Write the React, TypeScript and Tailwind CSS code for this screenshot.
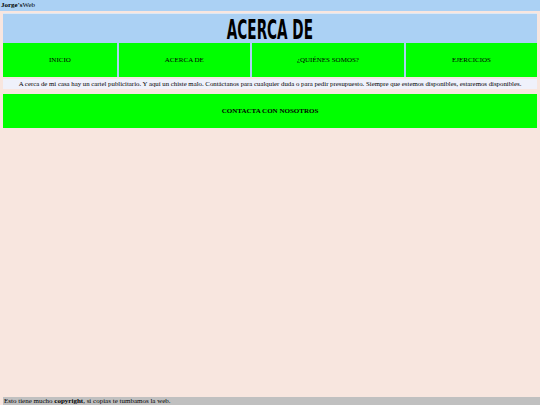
const navLinks = [
  { label: "INICIO" },
  { label: "ACERCA DE" },
  { label: "¿QUIÉNES SOMOS?" },
  { label: "EJERCICIOS" },
];

export default function App() {
  return (
    <div className="min-h-screen flex flex-col bg-[#f8e6df] text-black font-['Liberation_Serif',serif]">
      {/* Top bar */}
      <div className="h-[11px] bg-[#abd1f4] text-[7px] leading-[11px] pl-px">
        <b>Jorge's</b>Web
      </div>

      <main className="px-[3px] pt-[2px]">
        {/* Header */}
        <header className="bg-[#abd1f4] border-t border-[#dde8f4]">
          <h1 className="h-[29px] text-center leading-[32px]">
            <span className="inline-block scale-x-[0.56] text-[27px] font-bold font-['DejaVu_Sans_Condensed','DejaVu_Sans',sans-serif] [font-stretch:condensed]">
              ACERCA DE
            </span>
          </h1>
          <nav className="grid grid-cols-[113fr_130fr_151fr_130fr] gap-[2px]">
            {navLinks.map((link) => (
              <a
                key={link.label}
                href="#"
                className="h-[34px] bg-[#00ff00] flex items-center justify-center text-[7px]"
              >
                {link.label}
              </a>
            ))}
          </nav>
        </header>

        {/* Intro */}
        <p className="mt-[2px] h-[10px] bg-[#eff1fb] text-center text-[6.8px] leading-[10px]">
          A cerca de mi casa hay un cartel publicitario. Y aquí un chiste malo. Contáctanos para cualquier duda o para pedir presupuesto. Siempre que estemos disponibles, estaremos disponibles.
        </p>

        {/* Contact */}
        <div className="mt-[5px] h-[34px] bg-[#00ff00] flex items-center justify-center text-[7px] font-bold">
          CONTACTA CON NOSOTROS
        </div>
      </main>

      {/* Footer */}
      <footer className="mt-auto ml-[3px] h-[8px] bg-[#c0c0c0] text-[7px] leading-[8px] pl-px">
        Esto tiene mucho <b>copyright</b>, si copias te tumbamos la web.
      </footer>
    </div>
  );
}
